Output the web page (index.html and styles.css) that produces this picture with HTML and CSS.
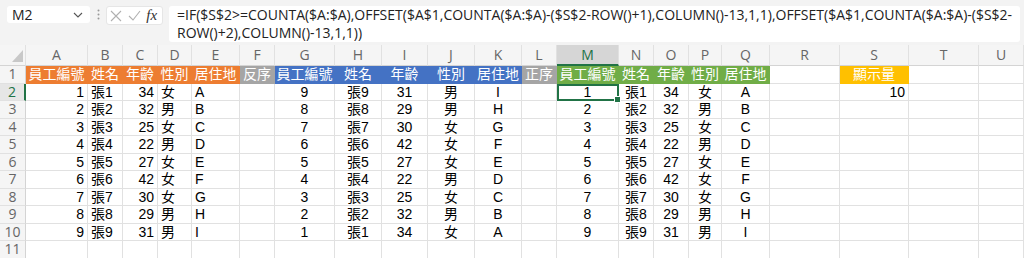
FILE: index.html
```html
<!DOCTYPE html>
<html lang="zh-Hant">
<head>
    <meta charset="UTF-8">
    <title>Sheet</title>
    <link rel="stylesheet" href="styles.css">
</head>
<body onload="buildSheet()">

<div class="fbar">
    <div class="namebox">
        <span>M2</span>
        <svg width="10" height="6" viewBox="0 0 10 6"><path d="M1 1 L5 5 L9 1" fill="none" stroke="#555" stroke-width="1.1"/></svg>
    </div>
    <div class="grip">
        <svg width="3" height="11" viewBox="0 0 3 11"><circle cx="1.5" cy="1.5" r="1" fill="#999"/><circle cx="1.5" cy="5.5" r="1" fill="#999"/><circle cx="1.5" cy="9.5" r="1" fill="#999"/></svg>
    </div>
    <div class="fxbox">
        <svg width="12" height="12" viewBox="0 0 12 12"><path d="M1 1 L11 11 M11 1 L1 11" stroke="#b0b0b0" stroke-width="1.1"/></svg>
        <svg width="13" height="11" viewBox="0 0 13 11"><path d="M1 6 L5 10 L12 1" fill="none" stroke="#b0b0b0" stroke-width="1.1"/></svg>
        <span class="fx">fx</span>
    </div>
    <div class="formula">=IF($S$2&gt;=COUNTA($A:$A),OFFSET($A$1,COUNTA($A:$A)-($S$2-ROW()+1),COLUMN()-13,1,1),OFFSET($A$1,COUNTA($A:$A)-($S$2-<br>ROW()+2),COLUMN()-13,1,1))</div>
</div>

<table class="sheet">
    <colgroup>
        <col style="width:26px"><col style="width:62px"><col style="width:35px"><col style="width:35px">
        <col style="width:34px"><col style="width:48px"><col style="width:35px"><col style="width:60px">
        <col style="width:47px"><col style="width:46px"><col style="width:47px"><col style="width:47px">
        <col style="width:35px"><col style="width:62px"><col style="width:35px"><col style="width:35px">
        <col style="width:33px"><col style="width:48px"><col style="width:70px"><col style="width:69px">
        <col style="width:70px"><col style="width:45px">
    </colgroup>
    <tbody id="rows"></tbody>
</table>

<script>

    var people = [
        [1, "張1", 34, "女", "A"],
        [2, "張2", 32, "男", "B"],
        [3, "張3", 25, "女", "C"],
        [4, "張4", 22, "男", "D"],
        [5, "張5", 27, "女", "E"],
        [6, "張6", 42, "女", "F"],
        [7, "張7", 30, "女", "G"],
        [8, "張8", 29, "男", "H"],
        [9, "張9", 31, "男", "I"]
    ];
    var heads = ["員工編號", "姓名", "年齡", "性別", "居住地"];

    function td(cls, text) {
        return '<td class="' + cls + '">' + text + '</td>';
    }

    // one block of five columns, all centred
    function block(p, first) {
        var s = "";
        for (var k = 0; k < 5; k++) {
            s += td(first && k == 0 ? "mid active" : "mid", p[k]);
        }
        return s;
    }

    function buildSheet() {
        var letters = "ABCDEFGHIJKLMNOPQRSTU";
        var i;
        var list = '<tr class="colhead"><th class="corner"><svg width="26" height="20" viewBox="0 0 26 20">'
                + '<polygon points="12,17 23,17 23,5" fill="#c8c8c8"/></svg></th>';
        for (i = 0; i < letters.length; i++) {
            list += '<th' + (letters.charAt(i) == "M" ? ' class="sel"' : '') + '>' + letters.charAt(i) + '</th>';
        }
        list += '</tr>\n';

        // row 1 - coloured titles
        list += '<tr><th class="rowhead">1</th>';
        for (i = 0; i < 5; i++) list += td("head orange", heads[i]);
        list += td("head grey", "反序");
        for (i = 0; i < 5; i++) list += td("head blue", heads[i]);
        list += td("head grey", "正序");
        for (i = 0; i < 5; i++) list += td("head green", heads[i]);
        list += td("", "") + td("head gold", "顯示量") + td("", "") + td("", "");
        list += '</tr>\n';

        for (var r = 0; r < 10; r++) {
            list += '<tr><th class="rowhead' + (r == 0 ? ' sel' : '') + '">' + (r + 2) + '</th>';
            if (r < 9) {
                var p = people[r];
                var q = people[8 - r];
                list += td("num", p[0]) + td("txt", p[1]) + td("num", p[2]) + td("txt", p[3]) + td("txt", p[4]);
                list += td("", "") + block(q, false) + td("", "") + block(p, r == 0);
                list += td("", "") + td("num", r == 0 ? 10 : "") + td("", "") + td("", "");
            } else {
                for (i = 0; i < 21; i++) list += td("", "");
            }
            list += '</tr>\n';
        }
        document.getElementById('rows').innerHTML = list;
    }

</script>
</body>
</html>
```

FILE: styles.css
```css
body {
    margin: 0;
    background-color: #fff;
    font-family: "Liberation Sans", "Noto Sans CJK TC", sans-serif;
}

.fbar {
    display: flex;
    align-items: flex-start;
    height: 45px;
    box-sizing: border-box;
    padding: 6px 4px 0 7px;
    background-color: #f3f3f3;
}

.namebox {
    display: flex;
    align-items: center;
    justify-content: space-between;
    width: 83px;
    height: 17px;
    box-sizing: border-box;
    padding: 0 7px 0 5px;
    background-color: #fff;
    border-radius: 3px;
    font: 14px "Open Sans", sans-serif;
    color: #222;
}

.grip {
    width: 16px;
    display: flex;
    justify-content: center;
    padding-top: 3px;
}

.fxbox {
    display: flex;
    align-items: center;
    justify-content: space-around;
    width: 57px;
    height: 19px;
    box-sizing: border-box;
    padding: 0 2px 0 0;
    background-color: #fff;
    border: 1px solid #e6e6e6;
    border-radius: 3px;
}

.fx {
    font: italic 15px "Liberation Serif", serif;
    color: #333;
}

.formula {
    flex: 1;
    height: 36px;
    margin-left: 6px;
    padding: 0 8px;
    background-color: #fff;
    border-radius: 3px;
    font: 14px/18px "Open Sans", sans-serif;
    color: #222;
    white-space: nowrap;
    overflow: hidden;
}

.sheet {
    border-collapse: separate;
    border-spacing: 0;
    table-layout: fixed;
    width: 1024px;
}

.sheet tr {
    height: 17.5px;
}

.sheet tr.colhead {
    height: 20px;
}

.sheet th {
    padding: 0;
    font: 14px/16px "Open Sans", sans-serif;
    font-weight: normal;
    color: #666;
    background-color: #f5f5f5;
    border-right: 1px solid #e1e1e1;
    border-bottom: 1px solid #d4d4d4;
}

.sheet th.corner {
    line-height: 0;
    vertical-align: bottom;
}

.sheet th.sel {
    background-color: #d6d6d6;
    color: #217346;
    border-bottom: 2px solid #217346;
}

.sheet th.rowhead {
    text-align: center;
    border-right: 1px solid #d4d4d4;
    border-bottom: 1px solid #e1e1e1;
}

.sheet th.rowhead.sel {
    background-color: #e6e6e6;
    color: #217346;
    border-right: 2px solid #217346;
}

.sheet td {
    padding: 0 3px;
    font-size: 14px;
    line-height: 16px;
    color: #000;
    white-space: nowrap;
    border-right: 1px solid #e1e1e1;
    border-bottom: 1px solid #e1e1e1;
}

td.num {
    text-align: right;
}

td.txt {
    text-align: left;
}

td.mid {
    text-align: center;
}

.sheet td.head {
    padding: 0;
    text-align: center;
    color: #fff;
}

td.orange { background-color: #ed7d31; border-color: #ed7d31; }
td.grey   { background-color: #a5a5a5; border-color: #a5a5a5; }
td.blue   { background-color: #4472c4; border-color: #4472c4; }
td.green  { background-color: #70ad47; border-color: #70ad47; }
td.gold   { background-color: #ffc000; border-color: #ffc000; }

td.active {
    position: relative;
    outline: 2px solid #217346;
    outline-offset: -2px;
}

td.active::after {
    content: "";
    position: absolute;
    right: -3px;
    bottom: -3px;
    width: 5px;
    height: 5px;
    background-color: #217346;
    border: 1px solid #fff;
}
```
